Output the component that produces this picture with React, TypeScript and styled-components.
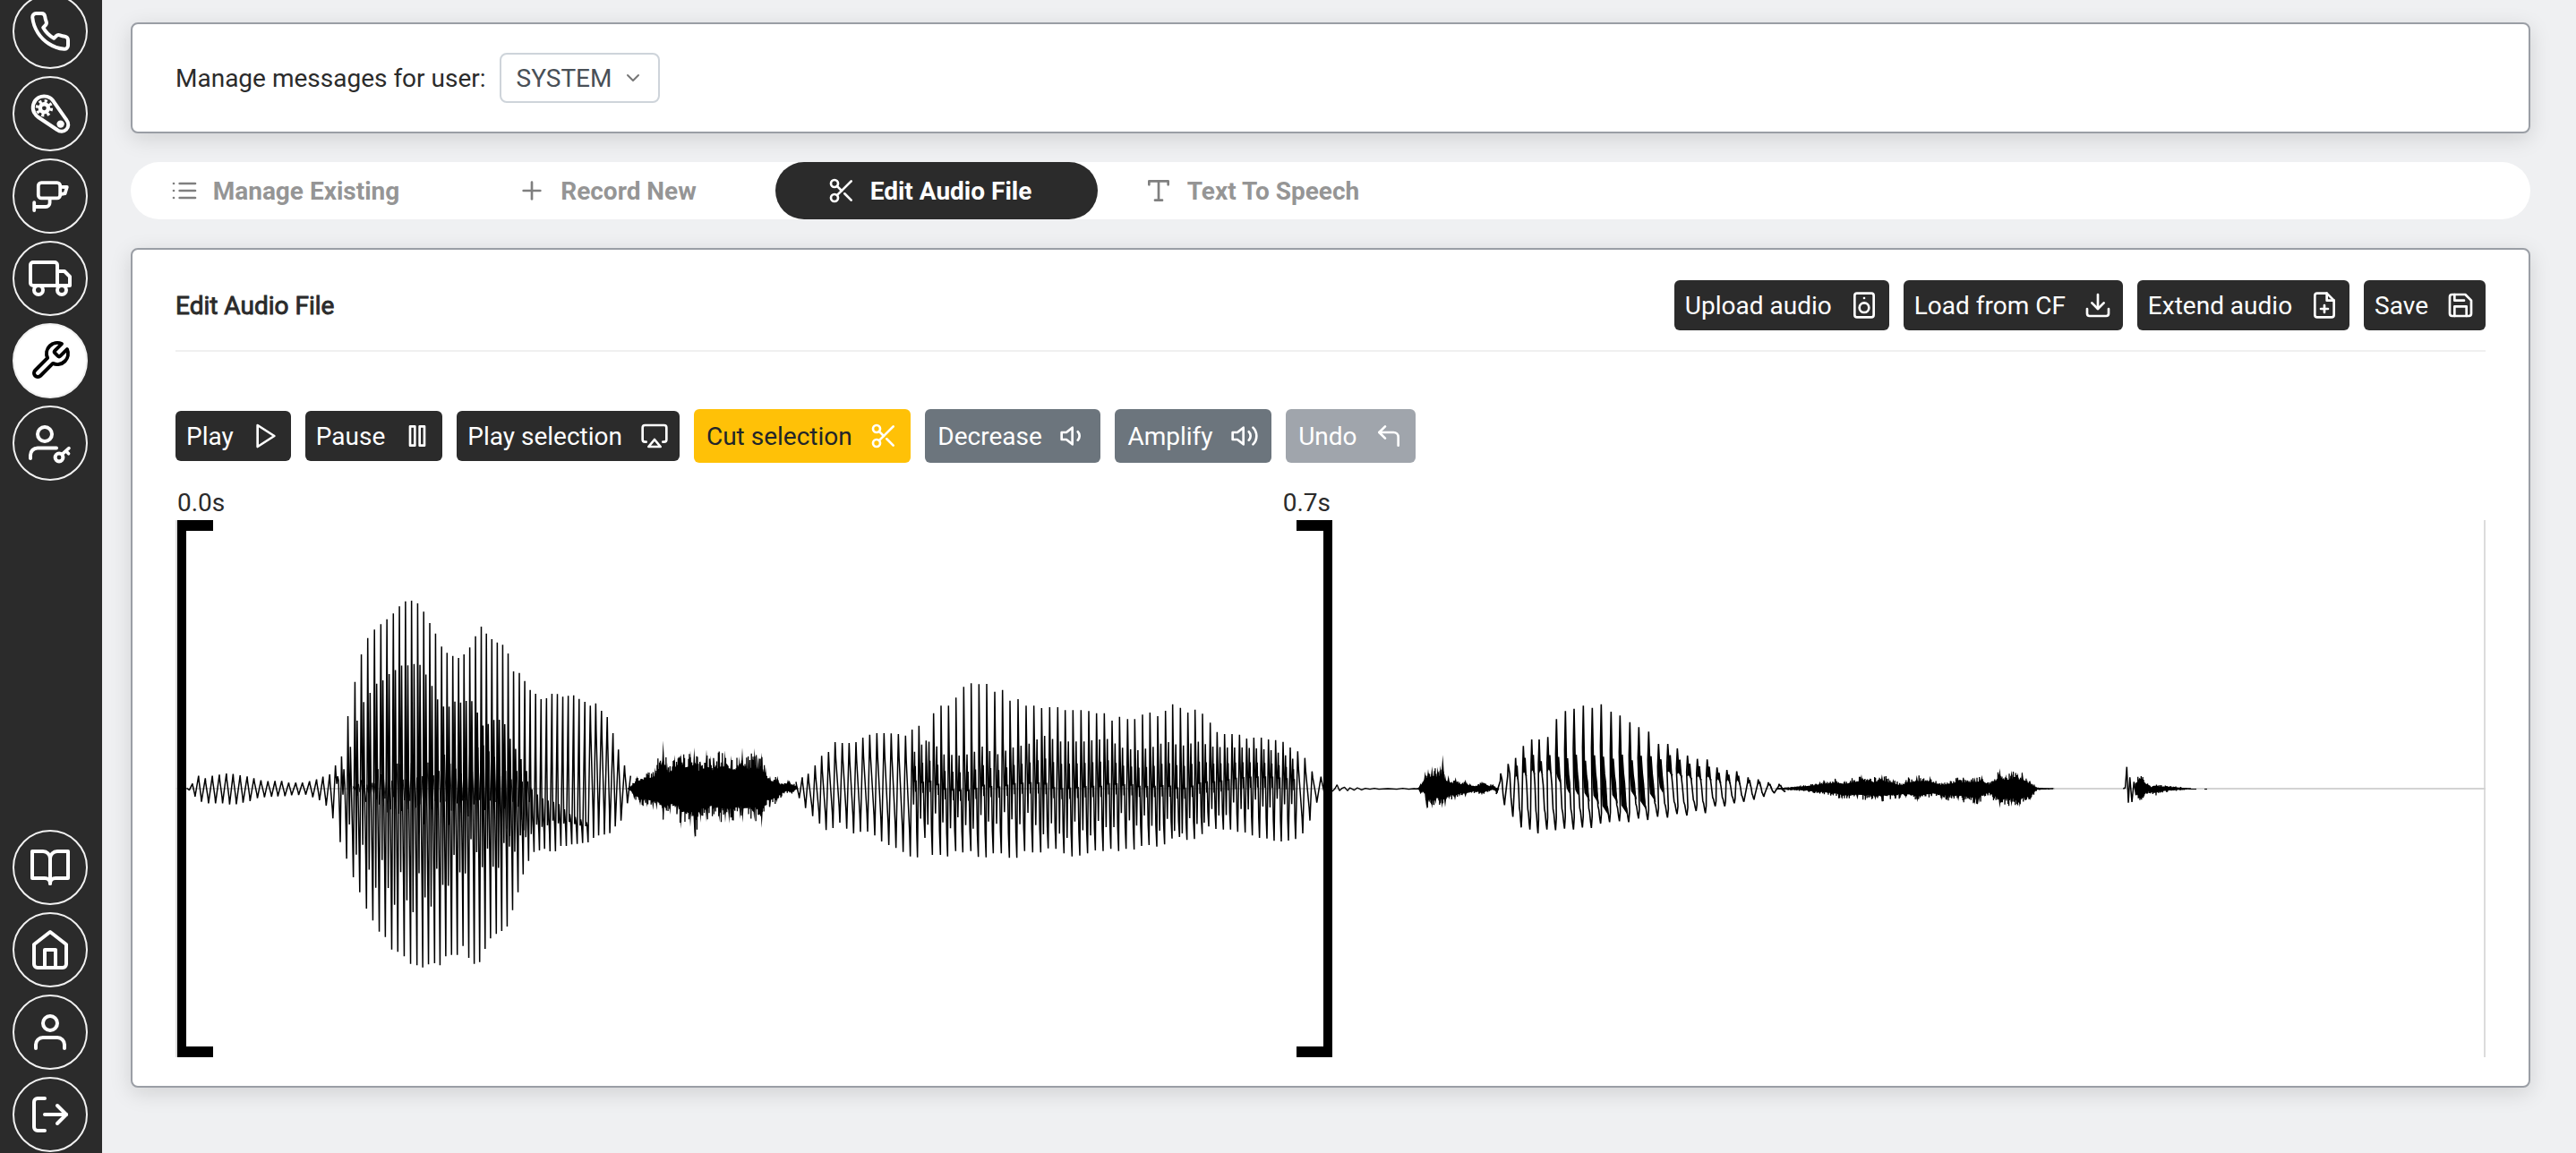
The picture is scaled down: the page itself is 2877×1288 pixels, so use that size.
import React from "react";
import styled, { createGlobalStyle, css } from "styled-components";
import {
  FiAirplay, FiBookOpen, FiChevronDown, FiCornerUpLeft, FiDownload, FiFilePlus, FiHome, FiList,
  FiLogOut, FiPause, FiPhone, FiPlay, FiPlus, FiSave, FiScissors, FiSpeaker, FiTool, FiType,
  FiUser, FiVolume1, FiVolume2,
} from "react-icons/fi";

const GlobalStyle = createGlobalStyle`
  *, *::before, *::after { box-sizing: border-box; }
  body {
    margin: 0;
    background: #eff0f2;
    color: #2b2b2b;
    font-family: Roboto, "Liberation Sans", sans-serif;
    font-size: 28px;
    line-height: 42px;
  }
`;

const Shell = styled.div`
  display: flex;
  height: 1288px;
  overflow: hidden;
`;

const Sidebar = styled.nav`
  display: flex;
  flex-direction: column;
  justify-content: space-between;
  flex: 0 0 114px;
  background: #2b2b2b;
  padding-bottom: 1px;
`;

const NavGroup = styled.div<{ $scrolled?: boolean }>`
  display: flex;
  flex-direction: column;
  align-items: center;
  gap: 8px;
  padding-right: 2px;
  margin-top: ${(p) => (p.$scrolled ? "-7px" : "0")};
`;

const NavButton = styled.a<{ $active?: boolean }>`
  display: flex;
  align-items: center;
  justify-content: center;
  width: 84px;
  height: 84px;
  border: 2px solid #f1f1f1;
  border-radius: 50%;
  color: ${(p) => (p.$active ? "#000" : "#fff")};
  background: ${(p) => (p.$active ? "#fff" : "transparent")};
  svg { width: 48px; height: 48px; }
`;

const Main = styled.main`
  display: flex;
  flex-direction: column;
  gap: 32px;
  flex: 1;
  padding: 25px 51px 0 32px;
`;

const Card = styled.section`
  background: #fff;
  border: 2px solid #9a9ea5;
  border-radius: 8px;
  box-shadow: 0 6px 24px rgba(0, 0, 0, 0.13);
`;

const UserCard = styled(Card)`
  display: flex;
  align-items: center;
  gap: 15px;
  height: 124px;
  padding: 0 48px;
`;

const Label = styled.span`
  padding-top: 2px;
`;

const UserSelect = styled.div`
  display: flex;
  align-items: center;
  justify-content: space-between;
  width: 179px;
  height: 56px;
  padding: 0 16px 0 17px;
  border: 2px solid #ced4da;
  border-radius: 8px;
  color: #495057;
  svg { width: 24px; height: 24px; color: #777; }
`;

const Tabs = styled.div`
  display: flex;
  height: 64px;
  border-radius: 32px;
  background: #fff;
`;

const Tab = styled.div<{ $active?: boolean }>`
  display: flex;
  align-items: center;
  justify-content: center;
  gap: 16px;
  width: 360px;
  padding-right: 16px;
  border-radius: 32px;
  font-weight: 700;
  color: ${(p) => (p.$active ? "#fff" : "#959595")};
  background: ${(p) => (p.$active ? "#2b2b2b" : "transparent")};
  svg { width: 32px; height: 32px; color: ${(p) => (p.$active ? "#fff" : "#7f7f7f")}; }
`;

const EditorCard = styled(Card)`
  height: 938px;
  padding: 34px 48px 0;
`;

const EditorHeader = styled.header`
  display: flex;
  align-items: center;
  justify-content: space-between;
  box-sizing: content-box;
  height: 56px;
  padding-bottom: 22px;
  border-bottom: 2px solid #f0f0f0;
`;

const Title = styled.h2`
  margin: 0;
  padding-top: 2px;
  font-size: 28px;
  font-weight: 400;
  -webkit-text-stroke: 0.9px currentColor;
`;

const ButtonRow = styled.div`
  display: flex;
  align-items: center;
  gap: 16px;
`;

const Toolbar = styled(ButtonRow)`
  margin-top: 64px;
`;

type Tone = "dark" | "warning" | "secondary" | "disabled";

const tones = {
  dark: css`height: 56px; padding: 0 12px; gap: 20px; background: #2b2b2b; color: #fff;`,
  warning: css`background: #ffc107; color: #212529;`,
  secondary: css`background: #6c757d; color: #fff;`,
  disabled: css`background: #a0a5ac; color: #fff;`,
};

const Button = styled.button<{ $tone: Tone }>`
  display: flex;
  align-items: center;
  gap: 19.6px;
  height: 60px;
  padding: 0 14px;
  border: 0;
  border-radius: 6px;
  font: inherit;
  white-space: nowrap;
  ${(p) => tones[p.$tone]}
  svg { width: 32px; height: 32px; color: #fff; }
`;

const Caption = styled.span`
  padding-top: 2px;
`;

const Timeline = styled.div`
  position: relative;
  margin-top: 64px;
  height: 600px;
`;

const WaveSvg = styled.svg`
  display: block;
  width: 100%;
  height: 100%;
`;

const Bracket = styled.div<{ $side: "left" | "right" }>`
  position: absolute;
  top: 0;
  left: ${(p) => (p.$side === "left" ? 2 : 1252)}px;
  width: 40px;
  height: 600px;
  border: solid #000;
  border-width: ${(p) => (p.$side === "left" ? "12px 0 12px 10px" : "12px 10px 12px 0")};
`;

const TimeLabel = styled.span<{ $side: "left" | "right" }>`
  position: absolute;
  top: -52px;
  ${(p) => (p.$side === "left" ? "left: -10px;" : "right: -8px;")}
`;

/* ---- sidebar glyphs ---- */

const glyph = {
  viewBox: "0 0 24 24", fill: "none", stroke: "currentColor",
  strokeWidth: 2, strokeLinecap: "round", strokeLinejoin: "round",
} as const;

const BeltIcon = () => (
  <svg {...glyph}>
    <path d="M3.2 11.600A6.200 6.200 0 1 1 14.100 5.400L21.300 15.700A3.800 3.800 0 0 1 15.900 21L5.400 14A6.200 6.200 0 0 1 3.200 11.600z" strokeWidth={2} />
    <circle cx="8.700" cy="8.900" r="2.300" strokeWidth={2.200} />
    <circle cx="8.700" cy="8.900" r="4" strokeWidth={1.700} strokeDasharray="1.570 1.571" strokeLinecap="butt" />
    <circle cx="17.800" cy="17.800" r="2.100" fill="currentColor" stroke="none" />
  </svg>
);

const CameraIcon = () => (
  <svg {...glyph} strokeWidth={1.9}>
    <rect x="5.400" y="4.600" width="12.200" height="8.600" rx="1.700" />
    <path d="M17.800 6.900l3.600.1-1.100 3.600-2.500.4M11.800 13.600v2.200a2.200 2.200 0 0 1-2.200 2.200H3.300M3.100 15.600v4.400" />
  </svg>
);

const TruckIcon = () => (
  <svg {...glyph}>
    <path d="M3 16h13V4.500A1.500 1.500 0 0 0 14.500 3h-12A1.500 1.500 0 0 0 1 4.500v10A1.500 1.500 0 0 0 2.500 16" />
    <path d="M16 8h4l3 3v5h-7z" />
    <circle cx="5.500" cy="18.500" r="2.500" />
    <circle cx="18.500" cy="18.500" r="2.500" />
  </svg>
);

const UserKeyIcon = () => (
  <svg {...glyph}>
    <circle cx="9" cy="7" r="4" />
    <path d="M1 20.500v-1.800a4 4 0 0 1 4-4h10.500" />
    <circle cx="17" cy="20" r="2.200" />
    <path d="M18.700 18.200l3.800-3.400M20.800 16.400l1.500 1.500" strokeWidth={1.8} />
  </svg>
);

/* ---- waveform data: "x:y" peak lists, mapped to timeline pixels ---- */

type Pt = [number, number];
const AXIS = 881;

const pairs = (s: string, ox: number, oy: number, sx: number, sy = 3): Pt[] =>
  s.trim().split(/\s+/).map((p) => {
    const [x, y] = p.split(":").map(Number);
    return [ox + x / sx, oy + y / sy];
  });

let seed = 7;
const rnd = () => {
  seed = (seed * 1103515245 + 12345) & 0x7fffffff;
  return seed / 0x7fffffff;
};

const at = (pts: Pt[], x: number) => {
  if (x <= pts[0][0]) return pts[0][1];
  for (let i = 1; i < pts.length; i++) {
    if (x <= pts[i][0]) {
      const [x0, y0] = pts[i - 1];
      const [x1, y1] = pts[i];
      return y0 + ((y1 - y0) * (x - x0)) / (x1 - x0 || 1);
    }
  }
  return pts[pts.length - 1][1];
};

const toPath = (pts: Pt[]) => "M" + pts.map(([x, y]) => `${x.toFixed(2)} ${y.toFixed(2)}`).join("L");

const vowelTop = pairs(`80:781 98:766 117:740 138:748 160:740 182:736 204:732 225:734 247:738 269:742 290:748 312:755 334:758 356:757
377:757 399:763 421:763 442:763 464:758 486:752 506:743 527:735 545:705 564:675 584:540 606:425 626:333 646:278
667:250 687:232 706:215 726:196 745:172 764:155 783:153 802:162 821:190 840:228 858:263 877:307 894:328 912:338
930:345 947:333 965:310 983:272 1001:240 1017:263 1034:282 1051:293 1068:301 1085:330 1102:390 1120:395 1137:422
1154:452 1171:465 1188:483 1205:480 1222:465 1239:466 1256:475 1273:472 1290:470 1307:482 1325:492 1342:505
1359:497 1377:522 1395:543 1413:597 1430:652 1449:705 1468:740`, 180, 620, 2.8);

const vowelBottom = pairs(`88:788 106:810 126:827 148:832 170:832 192:832 214:836 235:835 256:830 278:825 301:815 323:812 345:810
365:809 387:808 408:805 430:804 452:803 474:812 495:822 516:840 537:883 560:962 580:1018 601:1080 621:1130
642:1185 662:1225 682:1262 701:1280 721:1322 740:1330 760:1345 780:1370 800:1375 818:1382 836:1372 855:1368
872:1375 890:1345 908:1340 926:1340 944:1310 962:1350 979:1370 996:1364 1013:1320 1030:1285 1048:1270 1065:1260
1082:1245 1099:1190 1116:1130 1132:1070 1149:1025 1166:995 1183:990 1199:985 1216:993 1233:993 1250:975
1267:975 1284:970 1301:968 1318:965 1335:963 1352:948 1368:940 1386:937 1403:932 1420:910 1438:890 1458:832`, 180, 620, 2.8);

const vowelSubTop = pairs(`545:752 575:715 594:640 615:552 635:492 656:460 676:430 695:420 715:398 735:385 754:370 774:370 793:365 811:368
830:402 849:440 867:487 886:510 903:508 921:490 939:495 957:488 974:490 991:530 1009:575 1026:565 1043:552
1060:552 1077:568 1094:620 1110:650 1127:685 1144:725 1162:790 1200:820 1240:830 1280:870 1340:900 1430:915`, 180, 620, 2.8);

const vowelSubBottom = pairs(`545:755 572:830 590:930 611:1015 632:1075 652:1105 672:1130 692:1150 711:1175 731:1190 750:1210 770:1220
790:1215 808:1215 827:1205 846:1195 864:1170 882:1150 900:1120 917:1115 935:1105 953:1080 970:1050 987:1030
1005:1060 1022:1075 1040:1080 1057:1060 1074:1050 1090:1000 1108:1005 1124:995 1141:960 1166:930 1216:905
1280:900 1340:915 1430:918`, 180, 620, 2.8);

const vowelCoreTop = pairs("600:765 700:690 800:640 900:590 1000:590 1060:620 1120:700 1160:778", 180, 620, 2.8);
const vowelCoreBottom = pairs("600:800 700:880 800:950 900:950 1000:920 1080:950 1130:950 1160:890", 180, 620, 2.8);

const secondTop = pairs(`597:460 618:445 638:433 661:405 683:373 706:360 728:327 752:330 775:330 798:327 821:312 844:302 868:297 892:297
916:298 940:300 964:305 986:285 1009:272 1033:322 1058:230 1083:205 1108:205 1133:178 1159:142 1184:130 1210:133
1236:132 1263:158 1289:152 1314:188 1341:183 1368:205 1394:205 1420:213 1447:210 1474:210 1499:220 1525:220
1552:220 1578:223 1604:230 1630:230 1656:255 1681:242 1708:250 1732:250 1758:235 1783:228 1809:240 1835:222
1859:200 1885:212 1910:228 1934:218 1959:232 1985:262 2008:293 2033:300 2058:300 2083:302 2107:315 2131:312
2156:312 2180:318 2204:320 2229:326 2253:345 2278:358 2302:380 2326:425 2356:443`, 690, 720, 3);

const secondBottom = pairs(`608:515 629:548 653:575 676:600 698:622 721:615 744:597 767:617 790:633 813:628 837:627 861:640 884:660
908:672 932:682 956:695 980:710 1004:713 1029:648 1054:705 1081:705 1105:710 1132:692 1156:697 1183:692 1208:712
1234:713 1258:700 1285:700 1312:715 1337:715 1363:692 1390:697 1417:697 1442:683 1468:685 1495:700 1522:710
1548:707 1574:700 1600:690 1626:692 1652:685 1678:692 1703:685 1730:687 1755:675 1780:672 1806:677 1832:670
1857:650 1882:645 1907:655 1932:652 1958:635 1980:610 2004:618 2029:620 2053:620 2077:628 2102:630 2126:640
2150:648 2175:650 2199:658 2223:660 2247:657 2271:652 2295:633 2319:590 2342:530 2367:500`, 690, 720, 3);

const secondSubTop = pairs(`597:470 683:480 775:512 870:500 940:460 970:430 995:360 1033:322 1060:330 1095:368 1150:372 1190:365 1220:340 1270:370
1325:345 1375:335 1430:305 1480:325 1560:325 1640:315 1690:345 1740:355 1790:345 1840:325 1890:340 1945:325
1995:342 2045:345 2095:345 2145:348 2195:355 2240:372 2290:395 2326:440 2356:470`, 690, 720, 3);

const secondSubBottom = pairs(`597:472 683:483 775:505 870:495 920:525 970:540 1012:605 1060:612 1115:620 1165:625 1215:620 1270:605 1320:605 1370:610
1422:640 1450:660 1510:655 1560:645 1610:650 1660:620 1710:605 1760:620 1810:630 1860:645 1910:640 1965:605
2010:590 2060:570 2110:560 2160:555 2210:550 2260:540 2290:520 2326:460 2356:480`, 690, 720, 3);

const thirdTop = pairs(`408:312 433:280 458:260 484:220 512:198 537:198 566:190 595:130 625:103 654:95 685:85 715:92 745:80 778:105 808:118
841:140 871:157 904:172 937:213 968:213 1000:228 1034:252 1067:263 1100:265 1133:292 1166:300 1199:305 1237:325
1271:332 1305:342 1341:347`, 1540, 760, 3);

const thirdBottom = pairs(`421:418 449:457 477:493 506:500 533:513 563:500 592:502 622:497 652:500 682:493 712:495 743:480 773:475
806:472 837:475 870:463 901:468 934:457 967:460 999:448 1032:453 1063:438 1094:445 1127:422 1159:422 1191:412
1223:407 1257:400 1290:390 1325:378 1360:373`, 1540, 760, 3);

/* Voiced stretches: one spike pair per pitch period, with weaker ripples inside it. */
const voiced = (
  top: Pt[], bottom: Pt[], subTop: Pt[], subBottom: Pt[], from: number, to: number, ripple: number,
): Pt[] => {
  const out: Pt[] = [];
  top.forEach(([tx, ty], i) => {
    out.push([tx, ty]);
    const low = bottom.find(([bx]) => bx > tx);
    if (!low) return;
    const [bx, by] = low;
    const w = bx - tx;
    if (tx > from && tx < to && i < top.length - 1) {
      const st = at(subTop, tx + w * 0.55);
      const sb = at(subBottom, tx + w * 0.3);
      const swing = 0.82 + 0.18 * Math.sin(i * 2.1);
      const high = st + (sb - st) * 0.5;
      const mid = (st + sb) / 2;
      out.push([tx + w * 0.1, ty + (mid - ty) * 0.55]);
      out.push([tx + w * 0.28, mid + (sb - mid) * swing]);
      out.push([tx + w * 0.46, st]);
      if (ripple) {
        out.push([tx + w * 0.54, high - ripple * 0.2]);
        out.push([tx + w * 0.6, st + (high - st) * 0.45]);
        out.push([tx + w * 0.68, high + ripple]);
        out.push([tx + w * 0.75, high - ripple * 0.4]);
        out.push([tx + w * 0.86, by - (by - high) * 0.35]);
      } else {
        out.push([tx + w * 0.64, mid]);
        out.push([tx + w * 0.86, mid + (by - mid) * 0.55]);
      }
    } else {
      const mid = (ty + by) / 2;
      out.push([tx + w * 0.15, ty + (mid - ty) * 0.4]);
      out.push([tx + w * 0.5, mid]);
      out.push([tx + w * 0.85, by - (by - mid) * 0.4]);
    }
    out.push([bx, by]);
  });
  return out;
};

/* Third syllable: each period is a spike leaning into a heavy falling shoulder. */
const thirdLine: Pt[] = [[1671, 887]];
const thirdWedges: Pt[][] = [];
const wedgeReach = [0, 0, 0, 0, 0, 0, 0, -0.2, 0.05, 0.1, 0.2, 0.3, 0.62, 0.3, 0.6, 0.2, 0.5, 0.3, 0.05, 0];
thirdTop.forEach(([tx, ty], i) => {
  const [bx, by] = thirdBottom[i];
  const up = AXIS - ty;
  const down = by - AXIS;
  const w = bx - tx;
  const shoulder = Math.min(up * 0.75, 30 + 8 * Math.abs(Math.sin(i * 1.9)));
  thirdLine.push([tx - w * 0.1, AXIS - up * 0.5], [tx, ty]);
  if (i < 2) {
    thirdLine.push([tx + w * 0.35, AXIS - up * 0.6], [tx + w * 0.6, AXIS + down * 0.3]);
  } else {
    thirdLine.push([tx + w * 0.14, AXIS - shoulder * 0.75], [tx + w * 0.26, AXIS - shoulder]);
    thirdLine.push([tx + w * 0.4, AXIS - shoulder * 0.45], [tx + w * 0.52, AXIS - up * 0.08]);
    thirdLine.push([tx + w * 0.68, AXIS + down * 0.5], [tx + w * 0.78, AXIS + down * 0.6]);
    const reach = wedgeReach[i] ?? 0;
    const floor = reach ? AXIS + down * reach : AXIS - up * 0.32;
    const deep = reach > 0.15;
    thirdWedges.push([
      [tx - w * 0.06, AXIS - shoulder * 0.5],
      [tx, ty],
      [tx + w * 0.14, AXIS - shoulder * 0.75],
      [tx + w * 0.26, AXIS - shoulder],
      [tx + w * 0.4, AXIS - shoulder * 0.45],
      [tx + w * 0.56, deep ? AXIS : floor],
      deep ? [tx + w * 0.82, floor + 6] : [tx + w * 0.46, floor + 3],
      [tx + w * 0.14, deep ? floor - 4 : floor - 3],
    ]);
  }
  thirdLine.push([bx - w * 0.1, AXIS + down * 0.85], [bx, by], [bx + w * 0.1, AXIS + down * 0.7]);
});

/* Unvoiced stretches: dense jitter inside an envelope, always reaching the listed peaks. */
const noise = (top: Pt[], bottom: Pt[], core: number, step = 0.9): Pt[] => {
  const out: Pt[] = [];
  const end = top[top.length - 1][0];
  let x = top[0][0];
  while (x < end) {
    const t = AXIS - at(top, x);
    const b = at(bottom, x) - AXIS;
    const k = () => core + (1 - core) * Math.pow(rnd(), 2.8);
    out.push([x, AXIS - t * k()], [x + step / 2, AXIS + b * k()]);
    x += step;
  }
  return out;
};

const spikes = (pts: Pt[]) =>
  pts.map(([x, y]) => `M${x - 2.6} ${AXIS}L${x} ${y}L${x + 2.6} ${AXIS}z`).join("");

const hissTop = pairs(`40:475 65:440 100:425 125:412 152:322 165:395 190:370 212:365 243:355 256:345 277:390 297:352 310:372 323:380
340:358 359:355 380:372 407:375 417:345 437:375 458:347 470:375 482:362 495:410 510:440 535:440 548:465 570:452
597:470`, 690, 720, 3);
const hissBottom = pairs(`40:490 55:520 75:540 97:545 118:555 130:555 152:590 175:570 200:570 211:618 243:612 257:650 277:597
297:595 323:570 340:595 360:597 373:600 410:585 418:597 457:590 482:615 495:545 510:548 533:530 560:495 583:502
597:485`, 690, 720, 3);
const burstTop = pairs(`132:361 140:345 155:305 165:297 178:288 197:290 206:285 214:250 222:318 233:318 245:338 257:325 270:338 290:332
305:345 325:352 345:338 365:350 382:347 395:360`, 1540, 760, 3);
const burstBottom = pairs(`132:365 140:382 152:380 160:432 178:430 190:415 212:428 222:425 235:400 255:403 270:390 290:392 310:378
345:385 370:372 385:368 395:382`, 1540, 760, 3);
const tailTop = pairs(`10:240 30:238 60:230 92:218 122:208 140:215 173:195 190:207 213:195 235:210 250:225 265:205 281:198 307:200 330:222 360:205
394:205 408:197 425:222 443:175 455:195 466:182 478:190 487:186 502:215 515:238 547:242`, 1980, 800, 1.748);
const tailBottom = pairs(`10:246 30:248 60:252 92:262 118:268 135:280 165:280 200:282 213:286 240:278 260:275 282:288 310:270 330:282 362:285
394:297 402:293 420:265 443:308 466:303 482:305 503:283 515:248 547:244`, 1980, 800, 1.748);
const clickTop = pairs("708:225 714:187 721:182 727:213 733:220 738:236 747:225 755:230 775:233 790:236 815:242", 1980, 800, 1.748);
const clickBottom = pairs("708:262 714:300 722:293 728:260 737:260 747:268 755:260 775:252 790:250 815:245", 1980, 800, 1.748);
const click = pairs("684:243 688:240 691:170 694:290 697:205 701:288 705:220 709:265", 1980, 800, 1.748);
const decay = pairs(`1104:492 1112:484 1120:470 1128:490 1136:482 1145:478 1155:490 1163:480 1177:488 1188:480 1202:487 1215:482 1230:485
1245:482 1260:485 1290:483 1320:485 1340:482 1360:485 1378:483 1392:484`, 1120, 720, 3);

const wave = {
  vowel: toPath(voiced(vowelTop, vowelBottom, vowelSubTop, vowelSubBottom, 374, 655, 0)),
  vowelCore: toPath(noise(vowelCoreTop, vowelCoreBottom, 0.25, 3.1)),
  second: toPath(voiced(secondTop, secondBottom, secondSubTop, secondSubBottom, 1018, 1445, 9)),
  hiss: toPath(noise(hissTop, hissBottom, 0.58)),
  burst: toPath(noise(burstTop, burstBottom, 0.55)),
  tail: toPath(noise(tailTop, tailBottom, 0.55)),
  click: toPath(noise(clickTop, clickBottom, 0.55)),
  wedges: thirdWedges.map((w) => toPath(w) + "z").join(""),
};

const Waveform = () => (
  <WaveSvg viewBox="196 581 2580 600" preserveAspectRatio="none" fill="none" stroke="#000" strokeLinejoin="bevel">
    <path d="M197 581V1181M2775 581V1181" stroke="#dcdcdc" strokeWidth={2} />
    <path d="M196 881H2776" stroke="#d3d3d3" strokeWidth={2} />
    <path d={wave.vowel} strokeWidth={1.5} />
    <path d={wave.vowelCore} strokeWidth={0.9} />
    <path d={wave.hiss} strokeWidth={1.3} />
    <path d={spikes([...hissTop, ...hissBottom])} fill="#000" stroke="none" />
    <path d={wave.second} strokeWidth={1.5} />
    <path d={toPath(decay)} strokeWidth={1.3} />
    <path d={wave.burst} strokeWidth={1.3} />
    <path d={spikes([...burstTop, ...burstBottom])} fill="#000" stroke="none" />
    <path d={toPath(thirdLine)} strokeWidth={1.6} />
    <path d={wave.wedges} fill="#000" stroke="none" />
    <path d={wave.tail} strokeWidth={1.3} />
    <path d={spikes([...tailTop, ...tailBottom])} fill="#000" stroke="none" />
    <path d={toPath(click)} strokeWidth={1.5} />
    <path d={wave.click} strokeWidth={1.3} />
    <path d="M2446 881.500h7M2462 881.500h3" strokeWidth={1} />
  </WaveSvg>
);

export default function App() {
  return (
    <>
      <GlobalStyle />
      <Shell>
        <Sidebar>
          <NavGroup $scrolled>
            <NavButton><FiPhone /></NavButton>
            <NavButton><BeltIcon /></NavButton>
            <NavButton><CameraIcon /></NavButton>
            <NavButton><TruckIcon /></NavButton>
            <NavButton $active><FiTool /></NavButton>
            <NavButton><UserKeyIcon /></NavButton>
          </NavGroup>
          <NavGroup>
            <NavButton><FiBookOpen /></NavButton>
            <NavButton><FiHome /></NavButton>
            <NavButton><FiUser /></NavButton>
            <NavButton><FiLogOut /></NavButton>
          </NavGroup>
        </Sidebar>
        <Main>
          <UserCard>
            <Label>Manage messages for user:</Label>
            <UserSelect>
              <Caption>SYSTEM</Caption>
              <FiChevronDown />
            </UserSelect>
          </UserCard>
          <Tabs>
            <Tab><FiList /><Caption>Manage Existing</Caption></Tab>
            <Tab><FiPlus /><Caption>Record New</Caption></Tab>
            <Tab $active><FiScissors /><Caption>Edit Audio File</Caption></Tab>
            <Tab><FiType /><Caption>Text To Speech</Caption></Tab>
          </Tabs>
          <EditorCard>
            <EditorHeader>
              <Title>Edit Audio File</Title>
              <ButtonRow>
                <Button $tone="dark"><Caption>Upload audio</Caption><FiSpeaker /></Button>
                <Button $tone="dark"><Caption>Load from CF</Caption><FiDownload /></Button>
                <Button $tone="dark"><Caption>Extend audio</Caption><FiFilePlus /></Button>
                <Button $tone="dark"><Caption>Save</Caption><FiSave /></Button>
              </ButtonRow>
            </EditorHeader>
            <Toolbar>
              <Button $tone="dark"><Caption>Play</Caption><FiPlay /></Button>
              <Button $tone="dark"><Caption>Pause</Caption><FiPause /></Button>
              <Button $tone="dark"><Caption>Play selection</Caption><FiAirplay /></Button>
              <Button $tone="warning"><Caption>Cut selection</Caption><FiScissors /></Button>
              <Button $tone="secondary"><Caption>Decrease</Caption><FiVolume1 /></Button>
              <Button $tone="secondary"><Caption>Amplify</Caption><FiVolume2 /></Button>
              <Button $tone="disabled"><Caption>Undo</Caption><FiCornerUpLeft /></Button>
            </Toolbar>
            <Timeline>
              <Waveform />
              <Bracket $side="left"><TimeLabel $side="left">0.0s</TimeLabel></Bracket>
              <Bracket $side="right"><TimeLabel $side="right">0.7s</TimeLabel></Bracket>
            </Timeline>
          </EditorCard>
        </Main>
      </Shell>
    </>
  );
}
